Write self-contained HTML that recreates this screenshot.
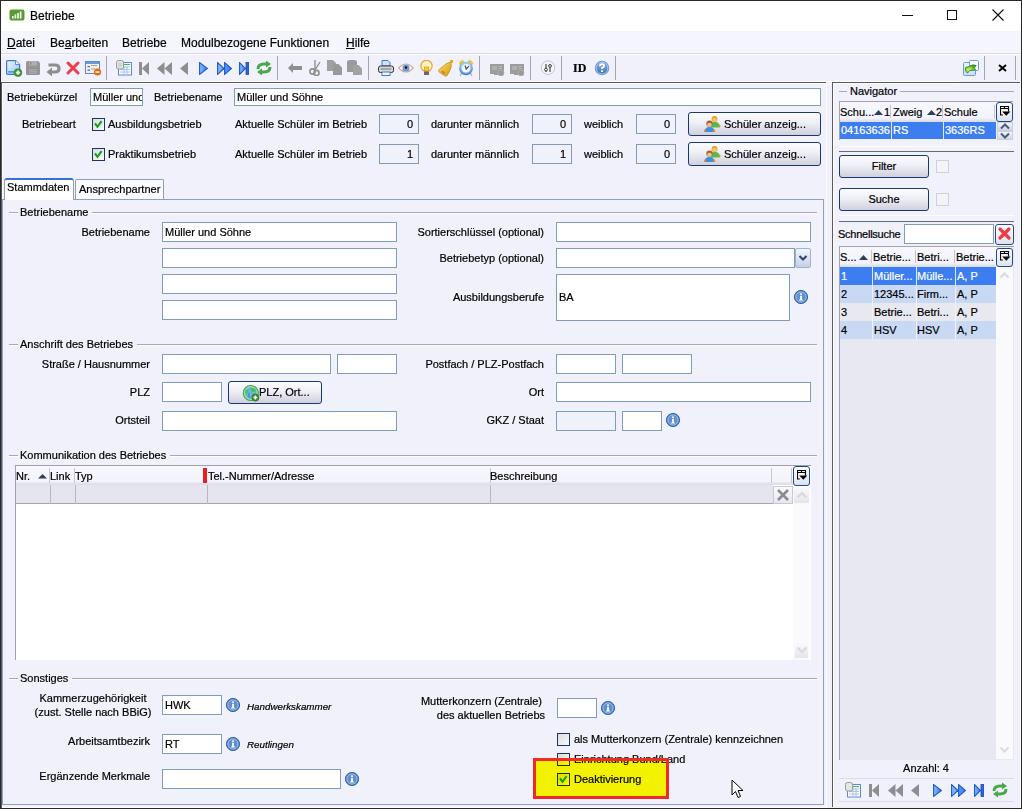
<!DOCTYPE html>
<html><head><meta charset="utf-8"><style>
html,body{margin:0;padding:0;width:1022px;height:809px;overflow:hidden;background:#fff}
.b,.t,.in,.btn,.cb,.ic{position:absolute}
.t{font-family:"Liberation Sans",sans-serif;font-size:11px;line-height:13px;white-space:nowrap;color:#000;-webkit-text-stroke-width:0.2px}
.m{font-size:12px;line-height:14px}
.it{font-style:italic;font-size:9.8px}
.in{box-sizing:border-box;border:1px solid #7f9db9;overflow:hidden}
.btn{box-sizing:border-box;border:1px solid #183872;border-radius:3px;background:linear-gradient(#fdfdff 0%,#eeeef6 45%,#d0d0dc 100%)}
.cb{box-sizing:border-box;width:13px;height:13px;border:1px solid #1c3560;background:linear-gradient(135deg,#dcdcdc,#fafafa)}
u{text-decoration:underline}
</style></head><body>
<div class="b" style="left:0;top:0;width:1022px;height:809px;background:#fff"></div>
<svg class="ic" style="left:9px;top:9px" width="16" height="12"><rect x="0.5" y="0.5" width="15" height="11" rx="2" fill="#5a9a32"/><rect x="3" y="7" width="1.6" height="2.5" fill="#fff"/><rect x="5.6" y="5.5" width="1.6" height="4" fill="#fff"/><rect x="8.2" y="4" width="1.6" height="5.5" fill="#fff"/><rect x="10.8" y="2.5" width="1.6" height="7" fill="#fff"/></svg>
<div class="t" style="left:30px;top:9px;font-size:12px;line-height:14px">Betriebe</div>
<div class="b" style="left:902px;top:15px;width:11px;height:1px;background:#111"></div>
<div class="b" style="left:947px;top:10px;width:10px;height:10px;border:1px solid #111;box-sizing:border-box"></div>
<svg class="ic" style="left:992px;top:9px" width="12" height="12"><path d="M0.5 0.5 L11.5 11.5 M11.5 0.5 L0.5 11.5" stroke="#111" stroke-width="1.1"/></svg>
<div class="b" style="left:1px;top:31px;width:1020px;height:23px;background:#f5f5fd"></div>
<div class="b" style="left:1px;top:53px;width:1020px;height:1px;background:#dcdce8"></div>
<div class="t m" style="left:7px;top:36px"><u>D</u>atei</div>
<div class="t m" style="left:50px;top:36px">Be<u>a</u>rbeiten</div>
<div class="t m" style="left:122px;top:36px">Betriebe</div>
<div class="t m" style="left:181px;top:36px">Modulbezogene Funktionen</div>
<div class="t m" style="left:346px;top:36px"><u>H</u>ilfe</div>
<div class="b" style="left:1px;top:54px;width:1020px;height:28px;background:#f1f1fb"></div>
<div class="b" style="left:1px;top:54px;width:1020px;height:1px;background:#fdfdff"></div>
<div class="b" style="left:1px;top:81px;width:958px;height:1px;background:#fdfdff"></div>
<div class="b" style="left:106px;top:56px;width:1px;height:24px;background:#a4a4ae"></div>
<div class="b" style="left:277px;top:56px;width:1px;height:24px;background:#a4a4ae"></div>
<div class="b" style="left:368px;top:56px;width:1px;height:24px;background:#a4a4ae"></div>
<div class="b" style="left:479px;top:56px;width:1px;height:24px;background:#a4a4ae"></div>
<div class="b" style="left:530px;top:56px;width:1px;height:24px;background:#a4a4ae"></div>
<div class="b" style="left:561px;top:56px;width:1px;height:24px;background:#a4a4ae"></div>
<div class="b" style="left:615px;top:56px;width:1px;height:24px;background:#a4a4ae"></div>
<div class="b" style="left:984px;top:56px;width:1px;height:24px;background:#a4a4ae"></div>
<div class="b" style="left:1015px;top:56px;width:1px;height:24px;background:#a4a4ae"></div>
<svg class="ic" style="left:5px;top:59px" width="18" height="18" viewBox="0 0 18 18"><defs><linearGradient id="gd" x1="0" y1="0" x2="1" y2="1"><stop offset="0" stop-color="#f0f7fe"/><stop offset="1" stop-color="#9cc6f0"/></linearGradient></defs><path d="M2.6 1.6 H10.6 L14.6 5.6 V14.4 Q14.6 15.4 13.6 15.4 H2.6 Q1.6 15.4 1.6 14.4 V2.6 Q1.6 1.6 2.6 1.6 Z" fill="url(#gd)" stroke="#3a7ad6" stroke-width="1.2"/><path d="M10.6 1.6 V5.6 H14.6" fill="#fff" stroke="#3a7ad6" stroke-width="0.9"/><rect x="3.2" y="12" width="8" height="1.7" fill="#3fa0ea"/><circle cx="13" cy="13.6" r="3.9" fill="#3f9a30" stroke="#2c7a22" stroke-width="0.6"/><path d="M10.9 13.6 H15.1 M13 11.5 V15.7" stroke="#fff" stroke-width="1.6"/></svg>
<svg class="ic" style="left:25px;top:60px" width="16" height="16" viewBox="0 0 16 16"><path d="M1 2.5 Q1 1 2.5 1 H13 L15 3 V13.5 Q15 15 13.5 15 H2.5 Q1 15 1 13.5 Z" fill="#969696"/><rect x="4" y="1" width="8" height="4.5" fill="#b0b0b0"/><rect x="5" y="1.8" width="1.4" height="2.8" fill="#8a8a8a"/><rect x="3.5" y="8.5" width="9" height="6" fill="#a8a8a8" stroke="#8c8c8c" stroke-width="0.8"/><path d="M4.5 10.5 H11.5 M4.5 12.5 H11.5" stroke="#9a9a9a" stroke-width="0.8"/></svg>
<svg class="ic" style="left:46px;top:61px" width="15" height="15" viewBox="0 0 15 15"><path d="M2.5 4 H9 Q13 4 13 7.5 Q13 11 9 11 H5.5" stroke="#8e8e8e" stroke-width="3.2" fill="none"/><path d="M0.5 11 L6 6.5 V15.5 Z" fill="#8e8e8e"/></svg>
<svg class="ic" style="left:66px;top:61px" width="14" height="14" viewBox="0 0 14 14"><path d="M2 2 L12 12 M12 2 L2 12" stroke="#f03c46" stroke-width="3" stroke-linecap="round"/></svg>
<svg class="ic" style="left:85px;top:61px" width="17" height="15" viewBox="0 0 17 15"><rect x="0.5" y="0.5" width="14" height="12" fill="#f3f0e6" stroke="#5a8ad0"/><rect x="1" y="1" width="13" height="2" fill="#6a9ad8"/><rect x="2.5" y="5" width="2.5" height="1.2" fill="#3a6ac8"/><rect x="2.5" y="8.5" width="2.5" height="1.2" fill="#3a6ac8"/><path d="M6 4.5 H12 M6 8 H10" stroke="#a0a0a0" stroke-width="1"/><circle cx="12.5" cy="11" r="3.6" fill="#e66a10"/><rect x="10.5" y="10.3" width="4" height="1.5" fill="#fff"/></svg>
<svg class="ic" style="left:116px;top:60px" width="17" height="16" viewBox="0 0 17 16"><rect x="2.5" y="2.5" width="13" height="12.5" fill="#fff" stroke="#5a8ad0"/><path d="M5 4.5 H14" stroke="#58b04a" stroke-width="1.2"/><path d="M4 7 H14 M4 9.5 H14 M4 12 H14 M8 6 V14 M11 6 V14" stroke="#9cc0ec" stroke-width="0.9"/><rect x="0.5" y="0.5" width="7" height="8.5" rx="2" fill="#e6e6e6" stroke="#9a9a9a"/><path d="M3 2.5 V7 M5 2.5 V7" stroke="#c0c0c0"/></svg>
<svg class="ic" style="left:139px;top:62px" width="10" height="13" viewBox="0 0 10 13"><rect x="0" y="0" width="3" height="13" fill="#8e8e8e"/><path d="M10 0 V13 L3 6.5 Z" fill="#8e8e8e"/></svg>
<svg class="ic" style="left:157px;top:62px" width="15" height="13" viewBox="0 0 15 13"><path d="M7.5 0 V13 L0 6.5 Z M15 0 V13 L7.5 6.5 Z" fill="#8e8e8e"/></svg>
<svg class="ic" style="left:180px;top:62px" width="8" height="13" viewBox="0 0 8 13"><path d="M8 0 V13 L0 6.5 Z" fill="#8e8e8e"/></svg>
<svg class="ic" style="left:199px;top:62px" width="9" height="13" viewBox="0 0 9 13"><defs><linearGradient id="gb" x1="0" y1="0" x2="1" y2="0"><stop offset="0" stop-color="#8cbcf4"/><stop offset="1" stop-color="#3a7ae0"/></linearGradient></defs><path d="M0.6 0.6 V12.4 L8.4 6.5 Z" fill="url(#gb)" stroke="#1a5ad0" stroke-width="1.1"/></svg>
<svg class="ic" style="left:217px;top:62px" width="15" height="13" viewBox="0 0 15 13"><defs><linearGradient id="gb" x1="0" y1="0" x2="1" y2="0"><stop offset="0" stop-color="#8cbcf4"/><stop offset="1" stop-color="#3a7ae0"/></linearGradient></defs><path d="M0.6 0.6 V12.4 L7 6.5 Z M7.6 0.6 V12.4 L14.4 6.5 Z" fill="url(#gb)" stroke="#1a5ad0" stroke-width="1.1"/></svg>
<svg class="ic" style="left:239px;top:62px" width="10" height="13" viewBox="0 0 10 13"><defs><linearGradient id="gb" x1="0" y1="0" x2="1" y2="0"><stop offset="0" stop-color="#8cbcf4"/><stop offset="1" stop-color="#3a7ae0"/></linearGradient></defs><path d="M0.6 0.6 V12.4 L6.5 6.5 Z" fill="url(#gb)" stroke="#1a5ad0" stroke-width="1.1"/><rect x="7" y="0.5" width="2.6" height="12" fill="#2a62d8" stroke="#1a4ac0" stroke-width="0.8"/></svg>
<svg class="ic" style="left:256px;top:60px" width="16" height="16" viewBox="0 0 16 16"><path d="M2 9 Q2 4 8 4 H11" stroke="#4aa84a" stroke-width="3" fill="none"/><path d="M10 0.5 L15 4 L10 7.5 Z" fill="#4aa84a"/><path d="M14 7 Q14 12 8 12 H5" stroke="#4aa84a" stroke-width="3" fill="none"/><path d="M6 8.5 L1 12 L6 15.5 Z" fill="#4aa84a"/></svg>
<svg class="ic" style="left:288px;top:63px" width="14" height="10" viewBox="0 0 14 10"><rect x="4" y="3" width="10" height="4" fill="#8e8e8e"/><path d="M5 0 V10 L0 5 Z" fill="#8e8e8e"/></svg>
<svg class="ic" style="left:309px;top:60px" width="12" height="16" viewBox="0 0 12 16"><path d="M6 0 V10 M11 2 L6 10" stroke="#909090" stroke-width="1.4" fill="none"/><circle cx="3.5" cy="11.5" r="2.6" stroke="#909090" stroke-width="1.6" fill="none"/><circle cx="7.5" cy="13" r="2.6" stroke="#909090" stroke-width="1.6" fill="none"/></svg>
<svg class="ic" style="left:327px;top:60px" width="16" height="16" viewBox="0 0 16 16"><path d="M0 0 H6 L9 3 V11 H0 Z" fill="#a0a0a0"/><path d="M6 4 H11.5 L15 7.5 V15 H6 Z" fill="#999"/></svg>
<svg class="ic" style="left:347px;top:60px" width="16" height="16" viewBox="0 0 16 16"><path d="M0 2 Q0 0 3 0 H7 Q10 0 10 2 V12 H0 Z" fill="#9a9a9a"/><path d="M6 5 H11.5 L15 8.5 V15 H6 Z" fill="#a2a2a2"/></svg>
<svg class="ic" style="left:378px;top:60px" width="16" height="16" viewBox="0 0 16 16"><path d="M4 0.5 H10 L12 2.5 V6 H4 Z" fill="#cfe2fa" stroke="#3a7ad6"/><rect x="0.5" y="6" width="15" height="6.5" rx="2" fill="#d8d8d8" stroke="#333"/><rect x="2.5" y="8" width="11" height="2" fill="#a8a8a8"/><rect x="4" y="12" width="8" height="3.5" fill="#fff" stroke="#3a7ad6"/></svg>
<svg class="ic" style="left:398px;top:62px" width="16" height="12" viewBox="0 0 16 12"><path d="M0.8 6 Q8 -2 15.2 6 Q8 14 0.8 6 Z" fill="#fff" stroke="#dca880" stroke-width="1.2"/><circle cx="8" cy="6" r="3.6" fill="#6a9ae6"/><circle cx="8" cy="5.5" r="1.2" fill="#111"/></svg>
<svg class="ic" style="left:419px;top:60px" width="15" height="16" viewBox="0 0 15 16"><circle cx="7.5" cy="6" r="5.6" fill="#fff8c0" stroke="#e8a040" stroke-width="1.2"/><rect x="5.5" y="7" width="4" height="4" fill="#f4d020" stroke="#e89030" stroke-width="0.8"/><rect x="5" y="11.5" width="5" height="3.5" fill="#6a6a6a"/></svg>
<svg class="ic" style="left:437px;top:59px" width="18" height="18" viewBox="0 0 18 18"><defs><linearGradient id="gbell" x1="0" y1="0" x2="1" y2="1"><stop offset="0" stop-color="#fbe070"/><stop offset="1" stop-color="#d69a10"/></linearGradient></defs><path d="M14 3 Q9.5 3.5 6.5 7 L2 10.5 Q0.8 12 2.3 13.2 L8 17 Q9.6 17.8 10.3 16.2 L12.6 12.2 Q15.2 7.5 14 3 Z" fill="url(#gbell)" stroke="#c48a10" stroke-width="0.7"/><circle cx="14.6" cy="2.4" r="1.7" fill="#e2aa22"/><ellipse cx="6.2" cy="13.3" rx="2.2" ry="1.4" transform="rotate(35 6.2 13.3)" fill="#c89020"/></svg>
<svg class="ic" style="left:458px;top:59px" width="16" height="18" viewBox="0 0 16 18"><defs><radialGradient id="gcl" cx="0.5" cy="0.4" r="0.6"><stop offset="0.55" stop-color="#9cd0f8"/><stop offset="1" stop-color="#2f6cc0"/></radialGradient></defs><ellipse cx="3.6" cy="3.6" rx="3" ry="2" transform="rotate(-40 3.6 3.6)" fill="#f2c442"/><ellipse cx="12.4" cy="3.6" rx="3" ry="2" transform="rotate(40 12.4 3.6)" fill="#f2c442"/><path d="M3.5 14.5 L2 16.8 M12.5 14.5 L14 16.8" stroke="#b4b4b4" stroke-width="1.3"/><circle cx="8" cy="9.5" r="6.8" fill="url(#gcl)"/><circle cx="8" cy="9.3" r="4.2" fill="#f4faff"/><path d="M7 6.5 L8.2 10 L10.8 7.2" stroke="#505050" stroke-width="1.2" fill="none"/></svg>
<svg class="ic" style="left:489px;top:63px" width="16" height="13" viewBox="0 0 16 13"><path d="M1 1 H15 V9 H11 V12 H5 V11 H1 Z" fill="#9c9c9c"/><rect x="3" y="3" width="5" height="4" fill="#b0b0b0"/><path d="M9.5 3.5 H13 M9.5 5.5 H13" stroke="#b8b8b8"/><circle cx="12" cy="10" r="3" fill="#999" stroke="#b0b0b0" stroke-width="0.8"/></svg>
<svg class="ic" style="left:509px;top:63px" width="16" height="13" viewBox="0 0 16 13"><path d="M1 1 H15 V9 H11 V12 H5 V11 H1 Z" fill="#9c9c9c"/><rect x="3" y="3" width="5" height="4" fill="#b0b0b0"/><path d="M9.5 3.5 H13 M9.5 5.5 H13" stroke="#b8b8b8"/><circle cx="12" cy="10" r="3" fill="#999" stroke="#b0b0b0" stroke-width="0.8"/></svg>
<svg class="ic" style="left:540px;top:60px" width="16" height="16" viewBox="0 0 16 16"><circle cx="8" cy="7.7" r="6.8" fill="#f4f4f4" stroke="#c8c8c8"/><path d="M6 4 V12 M10 4 V12" stroke="#3a3a3a" stroke-width="1.1"/><circle cx="6" cy="9.6" r="1.4" fill="#fff" stroke="#3a3a3a"/><circle cx="10" cy="6" r="1.4" fill="#fff" stroke="#3a3a3a"/></svg>
<div class="t" style="left:573px;top:61px;font-family:'Liberation Serif',serif;font-weight:bold;font-size:12px;line-height:14px">ID</div>
<svg class="ic" style="left:594px;top:60px" width="16" height="16" viewBox="0 0 16 16"><defs><linearGradient id="gh" x1="0" y1="0" x2="0" y2="1"><stop offset="0" stop-color="#8ab0e0"/><stop offset="1" stop-color="#4272b4"/></linearGradient></defs><circle cx="8" cy="8" r="7.2" fill="#5584c4"/><circle cx="8" cy="8" r="6" fill="url(#gh)" stroke="#b8d2f0" stroke-width="0.9"/><path d="M5.9 6.2 Q5.9 4.2 8 4.2 Q10.1 4.2 10.1 6 Q10.1 7.3 8 7.9 V9" stroke="#fff" stroke-width="1.7" fill="none"/><rect x="7.1" y="10.2" width="1.8" height="1.8" fill="#fff"/></svg>
<svg class="ic" style="left:963px;top:60px" width="16" height="16" viewBox="0 0 16 16"><defs><linearGradient id="gwin" x1="0" y1="0" x2="0" y2="1"><stop offset="0" stop-color="#f0f6fe"/><stop offset="1" stop-color="#c8def8"/></linearGradient><radialGradient id="garr" cx="0.35" cy="0.6" r="0.6"><stop offset="0" stop-color="#eaf860"/><stop offset="1" stop-color="#3aa020"/></radialGradient></defs><rect x="0.5" y="2.5" width="12" height="13" rx="1" fill="url(#gwin)" stroke="#6e9cd2"/><rect x="6.5" y="0.5" width="9" height="10" rx="1" fill="#fbfdff" stroke="#6e9cd2"/><path d="M13.2 5.6 Q10 3.8 6.5 6.3 L2.2 7.8 Q2 11.5 4.5 13.2 L6.5 10.6 Q9.5 9.8 12.6 9.6 Q10 8.2 13.2 5.6 Z" fill="url(#garr)" stroke="#178a17" stroke-width="0.8"/></svg>
<svg class="ic" style="left:998px;top:64px" width="9" height="8" viewBox="0 0 9 8"><path d="M1 1 L8 7 M8 1 L1 7" stroke="#000" stroke-width="1.9"/></svg>
<div class="b" style="left:1px;top:82px;width:826px;height:727px;background:#f1f1fb"></div>
<div class="b" style="left:0px;top:82px;width:827px;height:1px;background:#5a5a5a"></div>
<div class="b" style="left:1px;top:82px;width:1px;height:727px;background:#5a5a5a"></div>
<div class="b" style="left:2px;top:83px;width:824px;height:1px;background:#fdfdff"></div>
<div class="b" style="left:2px;top:807px;width:824px;height:1px;background:#fdfdff"></div>
<div class="b" style="left:2px;top:83px;width:1px;height:726px;background:#fdfdff"></div>
<div class="b" style="left:826px;top:82px;width:1px;height:727px;background:#fdfdff"></div>
<div class="t " style="left:7px;top:91px;">Betriebekürzel</div>
<div class="in" style="left:90px;top:88px;width:53px;height:18px;background:#fff;overflow:hidden"><div class="t" style="left:2px;top:2px">Müller und Söhne</div></div>
<div class="t " style="left:154px;top:91px;">Betriebename</div>
<div class="in" style="left:234px;top:88px;width:587px;height:18px;background:#fff;"><div class="t" style="left:2px;top:2px">Müller und Söhne</div></div>
<div class="t " style="left:22px;top:118px;">Betriebeart</div>
<div class="cb" style="left:92px;top:118px;"><svg width="13" height="13" style="position:absolute;left:-1px;top:-1px"><path d="M3 5.4 L5.5 8.8 L9.6 3.2" stroke="#14a014" stroke-width="2.1" fill="none"/></svg></div>
<div class="t " style="left:108px;top:118px;">Ausbildungsbetrieb</div>
<div class="t " style="left:235px;top:118px;">Aktuelle Schüler im Betrieb</div>
<div class="in" style="left:379px;top:114px;width:40px;height:20px;background:#f1f1fb;"><div class="t" style="right:5px;top:3px">0</div></div>
<div class="t " style="left:431px;top:118px;">darunter männlich</div>
<div class="in" style="left:532px;top:114px;width:40px;height:20px;background:#f1f1fb;"><div class="t" style="right:5px;top:3px">0</div></div>
<div class="t " style="left:584px;top:118px;">weiblich</div>
<div class="in" style="left:636px;top:114px;width:40px;height:20px;background:#f1f1fb;"><div class="t" style="right:5px;top:3px">0</div></div>
<div class="btn" style="left:688px;top:112px;width:133px;height:24px"><div class="t" style="left:35px;top:5px">Schüler anzeig...</div><svg class="ic" style="left:15px;top:3px" width="18" height="17"><path d="M7 11.5 Q7 5.8 10.5 5.8 Q14.5 5.8 15.8 9.5 L15.8 11.5 Z" fill="#5cb84a"/><circle cx="15.6" cy="10" r="1.1" fill="#e88a2a"/><circle cx="10.5" cy="2.9" r="3" fill="#e8a818"/><ellipse cx="10.5" cy="3.9" rx="2.2" ry="1.9" fill="#f6c28a"/><path d="M0.6 16 Q0.6 11 5.5 11 Q10.4 11 10.4 16 Z" fill="#3a8ee6"/><circle cx="0.9" cy="14.8" r="1.2" fill="#e88a2a"/><circle cx="10.1" cy="14.8" r="1.2" fill="#e88a2a"/><circle cx="5.5" cy="7.6" r="3.2" fill="#a86430"/><ellipse cx="5.5" cy="8.7" rx="2.3" ry="2" fill="#f6c28a"/></svg></div>
<div class="cb" style="left:92px;top:148px;"><svg width="13" height="13" style="position:absolute;left:-1px;top:-1px"><path d="M3 5.4 L5.5 8.8 L9.6 3.2" stroke="#14a014" stroke-width="2.1" fill="none"/></svg></div>
<div class="t " style="left:108px;top:148px;">Praktikumsbetrieb</div>
<div class="t " style="left:235px;top:148px;">Aktuelle Schüler im Betrieb</div>
<div class="in" style="left:379px;top:144px;width:40px;height:20px;background:#f1f1fb;"><div class="t" style="right:5px;top:3px">1</div></div>
<div class="t " style="left:431px;top:148px;">darunter männlich</div>
<div class="in" style="left:532px;top:144px;width:40px;height:20px;background:#f1f1fb;"><div class="t" style="right:5px;top:3px">1</div></div>
<div class="t " style="left:584px;top:148px;">weiblich</div>
<div class="in" style="left:636px;top:144px;width:40px;height:20px;background:#f1f1fb;"><div class="t" style="right:5px;top:3px">0</div></div>
<div class="btn" style="left:688px;top:142px;width:133px;height:24px"><div class="t" style="left:35px;top:5px">Schüler anzeig...</div><svg class="ic" style="left:15px;top:3px" width="18" height="17"><path d="M7 11.5 Q7 5.8 10.5 5.8 Q14.5 5.8 15.8 9.5 L15.8 11.5 Z" fill="#5cb84a"/><circle cx="15.6" cy="10" r="1.1" fill="#e88a2a"/><circle cx="10.5" cy="2.9" r="3" fill="#e8a818"/><ellipse cx="10.5" cy="3.9" rx="2.2" ry="1.9" fill="#f6c28a"/><path d="M0.6 16 Q0.6 11 5.5 11 Q10.4 11 10.4 16 Z" fill="#3a8ee6"/><circle cx="0.9" cy="14.8" r="1.2" fill="#e88a2a"/><circle cx="10.1" cy="14.8" r="1.2" fill="#e88a2a"/><circle cx="5.5" cy="7.6" r="3.2" fill="#a86430"/><ellipse cx="5.5" cy="8.7" rx="2.3" ry="2" fill="#f6c28a"/></svg></div>
<div class="b" style="left:2px;top:199px;width:822px;height:606px;border:1px solid #8da1bf;box-sizing:border-box;background:#f1f1fb"></div>
<div class="b" style="left:4px;top:178px;width:70px;height:22px;background:#fff;border:1px solid #8da1bf;border-bottom:none;border-top:2px solid #3a6fd8;border-radius:3px 3px 0 0;box-sizing:border-box"></div>
<div class="t " style="left:7px;top:181px;">Stammdaten</div>
<div class="b" style="left:75px;top:179px;width:89px;height:20px;background:#fbfbff;border:1px solid #8da1bf;border-bottom:none;border-radius:2px 2px 0 0;box-sizing:border-box"></div>
<div class="t " style="left:79px;top:183px;">Ansprechpartner</div>
<div class="b" style="left:9px;top:212px;width:9px;height:1px;background:#a7a7b4"></div>
<div class="b" style="left:9px;top:213px;width:9px;height:1px;background:#fdfdff"></div>
<div class="b" style="left:92px;top:212px;width:725px;height:1px;background:#a7a7b4"></div>
<div class="b" style="left:92px;top:213px;width:725px;height:1px;background:#fdfdff"></div>
<div class="t " style="left:20px;top:206px;">Betriebename</div>
<div class="t " style="right:872px;top:226px;">Betriebename</div>
<div class="in" style="left:162px;top:222px;width:235px;height:20px;background:#fff;"><div class="t" style="left:2px;top:3px">Müller und Söhne</div></div>
<div class="in" style="left:162px;top:248px;width:235px;height:20px;background:#fff;"></div>
<div class="in" style="left:162px;top:274px;width:235px;height:20px;background:#fff;"></div>
<div class="in" style="left:162px;top:300px;width:235px;height:20px;background:#fff;"></div>
<div class="t " style="right:478px;top:226px;">Sortierschlüssel (optional)</div>
<div class="in" style="left:556px;top:222px;width:255px;height:20px;background:#fff;"></div>
<div class="t " style="right:478px;top:252px;">Betriebetyp (optional)</div>
<div class="in" style="left:556px;top:248px;width:239px;height:20px;background:#fff;"></div>
<div class="b" style="left:795px;top:248px;width:16px;height:20px;border:1px solid #9fb3d0;border-radius:2px;box-sizing:border-box;background:linear-gradient(#f4f6fc,#c4cfe6)"></div>
<svg class="ic" style="left:797px;top:252px" width="12" height="12"><path d="M2.5 4 L6 7.5 L9.5 4" stroke="#2c4470" stroke-width="2" fill="none"/></svg>
<div class="t " style="right:478px;top:291px;">Ausbildungsberufe</div>
<div class="in" style="left:556px;top:274px;width:234px;height:47px;background:#fff;"></div>
<div class="t " style="left:559px;top:291px;">BA</div>
<svg class="ic" style="left:793px;top:289px" width="16" height="16"><circle cx="8" cy="8" r="6.6" fill="#4f7fc4" stroke="#3664b2" stroke-width="1"/><circle cx="8" cy="8" r="5.1" fill="#6290cc" stroke="#a8c6ea" stroke-width="0.9"/><rect x="7.1" y="4.4" width="1.8" height="1.5" fill="#fff"/><path d="M7.1 6.7 H8.9 V10.5 H9.9 V11.5 H6.1 V10.5 H7.1 Z" fill="#fff"/></svg>
<div class="b" style="left:9px;top:344px;width:9px;height:1px;background:#a7a7b4"></div>
<div class="b" style="left:9px;top:345px;width:9px;height:1px;background:#fdfdff"></div>
<div class="b" style="left:137px;top:344px;width:680px;height:1px;background:#a7a7b4"></div>
<div class="b" style="left:137px;top:345px;width:680px;height:1px;background:#fdfdff"></div>
<div class="t " style="left:20px;top:338px;">Anschrift des Betriebes</div>
<div class="t " style="right:872px;top:358px;">Straße / Hausnummer</div>
<div class="in" style="left:162px;top:354px;width:169px;height:20px;background:#fff;"></div>
<div class="in" style="left:337px;top:354px;width:60px;height:20px;background:#fff;"></div>
<div class="t " style="right:872px;top:386px;">PLZ</div>
<div class="in" style="left:162px;top:382px;width:60px;height:20px;background:#fff;"></div>
<div class="btn" style="left:228px;top:381px;width:94px;height:23px"><div class="t" style="left:30px;top:4px">PLZ, Ort...</div><svg class="ic" style="left:13px;top:2px" width="18" height="18"><circle cx="8.8" cy="9" r="7.5" fill="#6cb8d8" stroke="#48a848" stroke-width="1.2"/><circle cx="8.8" cy="9" r="6.3" fill="none" stroke="#c4ecb4" stroke-width="0.8"/><path d="M9 4 Q13 3.5 14.5 7 Q12 8.5 10 7.5 Q8 6.5 9 4 Z M3.5 6 Q5.5 5 6.5 7 Q5 9 4 11 Q2.8 9 3.5 6 Z" fill="#44c454"/><path d="M6.5 8 Q8.5 9 8 12 Q7.5 14.5 9 15 Q6.5 14.5 5.5 12 Z" fill="#4a98d8"/><circle cx="13.4" cy="13.5" r="3.7" fill="#3a8c2c" stroke="#2a6a1e" stroke-width="0.5"/><path d="M11.4 13.5 H15.4 M13.4 11.5 V15.5" stroke="#fff" stroke-width="1.5"/></svg></div>
<div class="t " style="right:872px;top:414px;">Ortsteil</div>
<div class="in" style="left:162px;top:411px;width:235px;height:20px;background:#fff;"></div>
<div class="t " style="right:478px;top:358px;">Postfach / PLZ-Postfach</div>
<div class="in" style="left:556px;top:354px;width:60px;height:20px;background:#fff;"></div>
<div class="in" style="left:622px;top:354px;width:70px;height:20px;background:#fff;"></div>
<div class="t " style="right:478px;top:386px;">Ort</div>
<div class="in" style="left:556px;top:382px;width:255px;height:20px;background:#fff;"></div>
<div class="t " style="right:478px;top:414px;">GKZ / Staat</div>
<div class="in" style="left:556px;top:411px;width:60px;height:20px;background:#f1f1fb;"></div>
<div class="in" style="left:622px;top:411px;width:40px;height:20px;background:#fff;"></div>
<svg class="ic" style="left:665px;top:412px" width="16" height="16"><circle cx="8" cy="8" r="6.6" fill="#4f7fc4" stroke="#3664b2" stroke-width="1"/><circle cx="8" cy="8" r="5.1" fill="#6290cc" stroke="#a8c6ea" stroke-width="0.9"/><rect x="7.1" y="4.4" width="1.8" height="1.5" fill="#fff"/><path d="M7.1 6.7 H8.9 V10.5 H9.9 V11.5 H6.1 V10.5 H7.1 Z" fill="#fff"/></svg>
<div class="b" style="left:9px;top:455px;width:9px;height:1px;background:#a7a7b4"></div>
<div class="b" style="left:9px;top:456px;width:9px;height:1px;background:#fdfdff"></div>
<div class="b" style="left:170px;top:455px;width:647px;height:1px;background:#a7a7b4"></div>
<div class="b" style="left:170px;top:456px;width:647px;height:1px;background:#fdfdff"></div>
<div class="t " style="left:20px;top:449px;">Kommunikation des Betriebes</div>
<div class="b" style="left:15px;top:465px;width:796px;height:195px;background:#fff;border-left:1px solid #a0a0a8;border-top:1px solid #a0a0a8;box-sizing:border-box"></div>
<div class="b" style="left:16px;top:466px;width:777px;height:19px;background:linear-gradient(#f7f7fd 0%,#f3f3fb 80%,#d9d9e3 100%)"></div>
<div class="b" style="left:16px;top:485px;width:757px;height:19px;background:#e5e5ef;border-bottom:1px solid #a6a6b0;box-sizing:border-box"></div>
<div class="b" style="left:50px;top:485px;width:1px;height:19px;background:#b8b8c4"></div>
<div class="b" style="left:75px;top:485px;width:1px;height:19px;background:#b8b8c4"></div>
<div class="b" style="left:207px;top:485px;width:1px;height:19px;background:#b8b8c4"></div>
<div class="b" style="left:490px;top:485px;width:1px;height:19px;background:#b8b8c4"></div>
<div class="b" style="left:49px;top:468px;width:1px;height:15px;background:#c8c8d4"></div>
<div class="b" style="left:74px;top:468px;width:1px;height:15px;background:#c8c8d4"></div>
<div class="b" style="left:490px;top:468px;width:1px;height:15px;background:#c8c8d4"></div>
<div class="b" style="left:771px;top:468px;width:1px;height:15px;background:#c8c8d4"></div>
<div class="b" style="left:791px;top:468px;width:1px;height:15px;background:#c8c8d4"></div>
<div class="b" style="left:203px;top:468px;width:4px;height:15px;background:#ee1c1c"></div>
<div class="t " style="left:16px;top:470px;">Nr.</div>
<svg class="ic" style="left:38px;top:474px" width="9" height="5"><path d="M0 4.5 L4.5 0 L9 4.5 Z" fill="#2c4058"/></svg>
<div class="t " style="left:50px;top:470px;">Link</div>
<div class="t " style="left:75px;top:470px;">Typ</div>
<div class="t " style="left:208px;top:470px;">Tel.-Nummer/Adresse</div>
<div class="t " style="left:490px;top:470px;">Beschreibung</div>
<div class="b" style="left:773px;top:486px;width:20px;height:18px;background:linear-gradient(#fbfbfd,#e6e6ee);border:1px solid #c8c8d0;box-sizing:border-box"></div>
<svg class="ic" style="left:776px;top:488px" width="14" height="14"><path d="M2 2 L12 12 M12 2 L2 12" stroke="#8c8c8c" stroke-width="2.6"/></svg>
<div class="b" style="left:793px;top:466px;width:17px;height:20px;background:linear-gradient(#fdfdff,#dfe3ee);border:1px solid #1e4a8a;border-radius:3px;box-sizing:border-box"></div>
<div class="b" style="left:793px;top:487px;width:17px;height:173px;background:#fafafd"></div>
<svg class="ic" style="left:797px;top:470px" width="12" height="12"><path d="M0.5 0 V9 H2.8 M0 0.5 H9 M0 2.5 H9 M4.5 0 V2.5 M8.5 0 V5.5" stroke="#000" stroke-width="1.15" fill="none"/><path d="M2.2 5.6 H10.4 L6.3 9.8 Z" fill="#000"/></svg>
<div class="b" style="left:794px;top:487px;width:15px;height:16px;background:linear-gradient(#fafafd,#e4e4ec)"></div>
<svg class="ic" style="left:796px;top:491px" width="12" height="8"><path d="M1.5 6.5 L6 2 L10.5 6.5" stroke="#d8d8de" stroke-width="2.2" fill="none"/></svg>
<div class="b" style="left:644px;top:643px;width:165px;height:15px;display:none"></div>
<div class="b" style="left:795px;top:643px;width:13px;height:15px;background:linear-gradient(#fafafd,#e4e4ec)"></div>
<svg class="ic" style="left:796px;top:646px" width="12" height="8"><path d="M1.5 1.5 L6 6 L10.5 1.5" stroke="#d8d8de" stroke-width="2.2" fill="none"/></svg>
<div class="b" style="left:9px;top:678px;width:9px;height:1px;background:#a7a7b4"></div>
<div class="b" style="left:9px;top:679px;width:9px;height:1px;background:#fdfdff"></div>
<div class="b" style="left:72px;top:678px;width:745px;height:1px;background:#a7a7b4"></div>
<div class="b" style="left:72px;top:679px;width:745px;height:1px;background:#fdfdff"></div>
<div class="t " style="left:20px;top:672px;">Sonstiges</div>
<div class="t " style="left:-57px;width:300px;text-align:center;top:692px;">Kammerzugehörigkeit</div>
<div class="t " style="left:-57px;width:300px;text-align:center;top:706px;">(zust. Stelle nach BBiG)</div>
<div class="in" style="left:162px;top:695px;width:60px;height:20px;background:#fff;"><div class="t" style="left:2px;top:3px">HWK</div></div>
<svg class="ic" style="left:225px;top:697px" width="16" height="16"><circle cx="8" cy="8" r="6.6" fill="#4f7fc4" stroke="#3664b2" stroke-width="1"/><circle cx="8" cy="8" r="5.1" fill="#6290cc" stroke="#a8c6ea" stroke-width="0.9"/><rect x="7.1" y="4.4" width="1.8" height="1.5" fill="#fff"/><path d="M7.1 6.7 H8.9 V10.5 H9.9 V11.5 H6.1 V10.5 H7.1 Z" fill="#fff"/></svg>
<div class="t it" style="left:247px;top:700px;">Handwerkskammer</div>
<div class="t " style="right:872px;top:735px;">Arbeitsamtbezirk</div>
<div class="in" style="left:162px;top:734px;width:60px;height:20px;background:#fff;"><div class="t" style="left:2px;top:3px">RT</div></div>
<svg class="ic" style="left:225px;top:736px" width="16" height="16"><circle cx="8" cy="8" r="6.6" fill="#4f7fc4" stroke="#3664b2" stroke-width="1"/><circle cx="8" cy="8" r="5.1" fill="#6290cc" stroke="#a8c6ea" stroke-width="0.9"/><rect x="7.1" y="4.4" width="1.8" height="1.5" fill="#fff"/><path d="M7.1 6.7 H8.9 V10.5 H9.9 V11.5 H6.1 V10.5 H7.1 Z" fill="#fff"/></svg>
<div class="t it" style="left:247px;top:738px;">Reutlingen</div>
<div class="t " style="right:872px;top:770px;">Ergänzende Merkmale</div>
<div class="in" style="left:162px;top:769px;width:179px;height:20px;background:#fff;"></div>
<svg class="ic" style="left:344px;top:771px" width="16" height="16"><circle cx="8" cy="8" r="6.6" fill="#4f7fc4" stroke="#3664b2" stroke-width="1"/><circle cx="8" cy="8" r="5.1" fill="#6290cc" stroke="#a8c6ea" stroke-width="0.9"/><rect x="7.1" y="4.4" width="1.8" height="1.5" fill="#fff"/><path d="M7.1 6.7 H8.9 V10.5 H9.9 V11.5 H6.1 V10.5 H7.1 Z" fill="#fff"/></svg>
<div class="t " style="right:480px;top:695px;">Mutterkonzern (Zentrale)</div>
<div class="t " style="right:477px;top:709px;">des aktuellen Betriebs</div>
<div class="in" style="left:557px;top:698px;width:40px;height:20px;background:#fff;"></div>
<svg class="ic" style="left:600px;top:700px" width="16" height="16"><circle cx="8" cy="8" r="6.6" fill="#4f7fc4" stroke="#3664b2" stroke-width="1"/><circle cx="8" cy="8" r="5.1" fill="#6290cc" stroke="#a8c6ea" stroke-width="0.9"/><rect x="7.1" y="4.4" width="1.8" height="1.5" fill="#fff"/><path d="M7.1 6.7 H8.9 V10.5 H9.9 V11.5 H6.1 V10.5 H7.1 Z" fill="#fff"/></svg>
<div class="cb" style="left:557px;top:733px;"></div>
<div class="t " style="left:574px;top:733px;">als Mutterkonzern (Zentrale) kennzeichnen</div>
<div class="cb" style="left:557px;top:753px;"></div>
<div class="t " style="left:574px;top:753px;">Einrichtung Bund/Land</div>
<div class="cb" style="left:557px;top:773px;"><svg width="13" height="13" style="position:absolute;left:-1px;top:-1px"><path d="M3 5.4 L5.5 8.8 L9.6 3.2" stroke="#14a014" stroke-width="2.1" fill="none"/></svg></div>
<div class="t " style="left:574px;top:773px;">Deaktivierung</div>
<div class="b" style="left:536px;top:761px;width:130px;height:35px;background:#ffff00;mix-blend-mode:multiply"></div>
<div class="b" style="left:533px;top:758px;width:136px;height:41px;border:3px solid #ee2a2a;box-sizing:border-box"></div>
<div class="b" style="left:827px;top:82px;width:5px;height:726px;background:#f1f1fb"></div>
<div class="b" style="left:832px;top:82px;width:189px;height:727px;background:#f1f1fb"></div>
<div class="b" style="left:832px;top:82px;width:189px;height:1px;background:#5a5a5a"></div>
<div class="b" style="left:832px;top:82px;width:1px;height:725px;background:#5a5a5a"></div>
<div class="b" style="left:833px;top:83px;width:187px;height:1px;background:#fdfdff"></div>
<div class="b" style="left:833px;top:83px;width:1px;height:726px;background:#fdfdff"></div>
<div class="b" style="left:1020px;top:82px;width:1px;height:727px;background:#fdfdff"></div>
<div class="b" style="left:839px;top:91px;width:8px;height:1px;background:#a7a7b4"></div>
<div class="t " style="left:850px;top:85px;">Navigator</div>
<div class="b" style="left:900px;top:91px;width:114px;height:1px;background:#a7a7b4"></div>
<div class="b" style="left:839px;top:101px;width:174px;height:39px;border-left:1px solid #a4a4ac;border-top:1px solid #a4a4ac;box-sizing:border-box"></div>
<div class="b" style="left:840px;top:102px;width:156px;height:20px;background:linear-gradient(#f7f7fd 0%,#f3f3fb 80%,#d9d9e3 100%)"></div>
<div class="b" style="left:840px;top:122px;width:156px;height:17px;background:#3c7ef0"></div>
<div class="b" style="left:890px;top:105px;width:1px;height:13px;background:#c4c4d0"></div>
<div class="b" style="left:942px;top:105px;width:1px;height:13px;background:#c4c4d0"></div>
<div class="b" style="left:994px;top:105px;width:1px;height:13px;background:#c4c4d0"></div>
<div class="b" style="left:891px;top:122px;width:1px;height:17px;background:#e4ecfc"></div>
<div class="b" style="left:943px;top:122px;width:1px;height:17px;background:#e4ecfc"></div>
<div class="t " style="left:840px;top:106px;">Schu...</div>
<svg class="ic" style="left:874px;top:110px" width="9" height="5" viewBox="0 0 9 5"><path d="M0 5 L4.5 0 L9 5 Z" fill="#2c4058"/></svg>
<div class="t " style="left:884px;top:106px;">1</div>
<div class="t " style="left:893px;top:106px;">Zweig</div>
<svg class="ic" style="left:927px;top:110px" width="9" height="5" viewBox="0 0 9 5"><path d="M0 5 L4.5 0 L9 5 Z" fill="#2c4058"/></svg>
<div class="t " style="left:936px;top:106px;">2</div>
<div class="t " style="left:944px;top:106px;">Schule</div>
<div class="t " style="left:841px;top:124px;color:#fff">04163636</div>
<div class="t " style="left:893px;top:124px;color:#fff">RS</div>
<div class="t " style="left:945px;top:124px;color:#fff">3636RS</div>
<div class="b" style="left:996px;top:102px;width:17px;height:20px;background:linear-gradient(#fdfdff,#dfe3ee);border:1px solid #1e4a8a;border-radius:3px;box-sizing:border-box"></div>
<svg class="ic" style="left:1000px;top:106px" width="12" height="12" viewBox="0 0 12 12"><path d="M0.5 0 V9 H2.8 M0 0.5 H9 M0 2.5 H9 M4.5 0 V2.5 M8.5 0 V5.5" stroke="#000" stroke-width="1.15" fill="none"/><path d="M2.2 5.6 H10.4 L6.3 9.8 Z" fill="#000"/></svg>
<div class="b" style="left:997px;top:122px;width:16px;height:9px;background:linear-gradient(#f4f6fc,#cdd6ea);border:1px solid #c8d0e0;box-sizing:border-box"></div>
<div class="b" style="left:997px;top:131px;width:16px;height:9px;background:linear-gradient(#f4f6fc,#cdd6ea);border:1px solid #c8d0e0;box-sizing:border-box"></div>
<svg class="ic" style="left:999px;top:123px" width="12" height="7" viewBox="0 0 12 7"><path d="M2 5.5 L6 1.5 L10 5.5" stroke="#4a5a78" stroke-width="2" fill="none"/></svg>
<svg class="ic" style="left:999px;top:132px" width="12" height="7" viewBox="0 0 12 7"><path d="M2 1.5 L6 5.5 L10 1.5" stroke="#4a5a78" stroke-width="2" fill="none"/></svg>
<div class="b" style="left:839px;top:146px;width:175px;height:1px;background:#fdfdff"></div>
<div class="b" style="left:839px;top:151px;width:175px;height:1px;background:#6a6a72"></div>
<div class="btn" style="left:839px;top:155px;width:90px;height:23px"><div class="t" style="left:0;width:88px;text-align:center;top:4px">Filter</div></div>
<div class="b" style="left:936px;top:160px;width:13px;height:13px;border:1px solid #d0d0d8;background:#f4f4f8;box-sizing:border-box"></div>
<div class="btn" style="left:839px;top:188px;width:90px;height:23px"><div class="t" style="left:0;width:88px;text-align:center;top:4px">Suche</div></div>
<div class="b" style="left:936px;top:193px;width:13px;height:13px;border:1px solid #d0d0d8;background:#f4f4f8;box-sizing:border-box"></div>
<div class="b" style="left:839px;top:215px;width:175px;height:1px;background:#fdfdff"></div>
<div class="b" style="left:839px;top:221px;width:175px;height:1px;background:#6a6a72"></div>
<div class="t " style="left:838px;top:228px;letter-spacing:-0.25px">Schnellsuche</div>
<div class="in" style="left:904px;top:224px;width:90px;height:20px;background:#fff;"></div>
<div class="b" style="left:995px;top:224px;width:19px;height:21px;background:linear-gradient(#fdfdff,#dfe3ee);border:1px solid #2a4a80;border-radius:3px;box-sizing:border-box"></div>
<svg class="ic" style="left:997px;top:226px" width="15" height="16" viewBox="0 0 15 16"><path d="M3 3 L12 12 M12 3 L3 12" stroke="#f03c46" stroke-width="3.2" stroke-linecap="round"/></svg>
<div class="b" style="left:839px;top:246px;width:175px;height:514px;border-left:1px solid #a4a4ac;border-top:1px solid #a4a4ac;box-sizing:border-box;background:#e8e8f2"></div>
<div class="b" style="left:840px;top:247px;width:156px;height:20px;background:linear-gradient(#f7f7fd 0%,#f3f3fb 80%,#d9d9e3 100%)"></div>
<div class="b" style="left:871px;top:250px;width:1px;height:13px;background:#c4c4d0"></div>
<div class="b" style="left:915px;top:250px;width:1px;height:13px;background:#c4c4d0"></div>
<div class="b" style="left:954px;top:250px;width:1px;height:13px;background:#c4c4d0"></div>
<div class="t " style="left:840px;top:251px;">S...</div>
<svg class="ic" style="left:859px;top:255px" width="9" height="5" viewBox="0 0 9 5"><path d="M0 5 L4.5 0 L9 5 Z" fill="#2c4058"/></svg>
<div class="t " style="left:873px;top:251px;">Betrie...</div>
<div class="t " style="left:917px;top:251px;">Betri...</div>
<div class="t " style="left:956px;top:251px;">Betrie...</div>
<div class="b" style="left:996px;top:248px;width:17px;height:19px;background:linear-gradient(#fdfdff,#dfe3ee);border:1px solid #1e4a8a;border-radius:3px;box-sizing:border-box"></div>
<svg class="ic" style="left:1000px;top:251px" width="12" height="12" viewBox="0 0 12 12"><path d="M0.5 0 V9 H2.8 M0 0.5 H9 M0 2.5 H9 M4.5 0 V2.5 M8.5 0 V5.5" stroke="#000" stroke-width="1.15" fill="none"/><path d="M2.2 5.6 H10.4 L6.3 9.8 Z" fill="#000"/></svg>
<div class="b" style="left:840px;top:267px;width:156px;height:18px;background:#3c7ef0"></div>
<div class="b" style="left:872px;top:267px;width:1px;height:18px;background:#e4ecfc"></div>
<div class="b" style="left:916px;top:267px;width:1px;height:18px;background:#e4ecfc"></div>
<div class="b" style="left:955px;top:267px;width:1px;height:18px;background:#e4ecfc"></div>
<div class="t " style="left:841px;top:270px;color:#fff">1</div>
<div class="t " style="left:874px;top:270px;color:#fff">Müller...</div>
<div class="t " style="left:917px;top:270px;color:#fff">Mülle...</div>
<div class="t " style="left:957px;top:270px;color:#fff">A, P</div>
<div class="b" style="left:840px;top:285px;width:156px;height:18px;background:#c9d9f4"></div>
<div class="b" style="left:872px;top:285px;width:1px;height:18px;background:#eef2fa"></div>
<div class="b" style="left:916px;top:285px;width:1px;height:18px;background:#eef2fa"></div>
<div class="b" style="left:955px;top:285px;width:1px;height:18px;background:#eef2fa"></div>
<div class="t " style="left:841px;top:288px;color:#000">2</div>
<div class="t " style="left:874px;top:288px;color:#000"> 12345...</div>
<div class="t " style="left:917px;top:288px;color:#000">Firm...</div>
<div class="t " style="left:957px;top:288px;color:#000">A, P</div>
<div class="b" style="left:840px;top:303px;width:156px;height:18px;background:#e8e8f0"></div>
<div class="b" style="left:872px;top:303px;width:1px;height:18px;background:#eef2fa"></div>
<div class="b" style="left:916px;top:303px;width:1px;height:18px;background:#eef2fa"></div>
<div class="b" style="left:955px;top:303px;width:1px;height:18px;background:#eef2fa"></div>
<div class="t " style="left:841px;top:306px;color:#000">3</div>
<div class="t " style="left:874px;top:306px;color:#000">Betrie...</div>
<div class="t " style="left:917px;top:306px;color:#000">Betri...</div>
<div class="t " style="left:957px;top:306px;color:#000">A, P</div>
<div class="b" style="left:840px;top:321px;width:156px;height:18px;background:#c9d9f4"></div>
<div class="b" style="left:872px;top:321px;width:1px;height:18px;background:#eef2fa"></div>
<div class="b" style="left:916px;top:321px;width:1px;height:18px;background:#eef2fa"></div>
<div class="b" style="left:955px;top:321px;width:1px;height:18px;background:#eef2fa"></div>
<div class="t " style="left:841px;top:324px;color:#000">4</div>
<div class="t " style="left:874px;top:324px;color:#000">HSV</div>
<div class="t " style="left:917px;top:324px;color:#000">HSV</div>
<div class="t " style="left:957px;top:324px;color:#000">A, P</div>
<div class="b" style="left:996px;top:267px;width:17px;height:492px;background:#fafafd"></div>
<svg class="ic" style="left:998px;top:269px" width="13" height="13" viewBox="0 0 13 13"><path d="M2.5 8.5 L6.5 4.5 L10.5 8.5" stroke="#dcdce0" stroke-width="2.2" fill="none"/></svg>
<svg class="ic" style="left:998px;top:743px" width="13" height="13" viewBox="0 0 13 13"><path d="M2.5 4.5 L6.5 8.5 L10.5 4.5" stroke="#dcdce0" stroke-width="2.2" fill="none"/></svg>
<div class="t " style="left:776px;width:300px;text-align:center;top:762px;">Anzahl: 4</div>
<div class="b" style="left:839px;top:778px;width:175px;height:1px;background:#dcdce8"></div>
<svg class="ic" style="left:845px;top:782px" width="17" height="16" viewBox="0 0 17 16"><rect x="2.5" y="2.5" width="13" height="12.5" fill="#fff" stroke="#5a8ad0"/><path d="M5 4.5 H14" stroke="#58b04a" stroke-width="1.2"/><path d="M4 7 H14 M4 9.5 H14 M4 12 H14 M8 6 V14 M11 6 V14" stroke="#9cc0ec" stroke-width="0.9"/><rect x="0.5" y="0.5" width="7" height="8.5" rx="2" fill="#e6e6e6" stroke="#9a9a9a"/></svg>
<svg class="ic" style="left:869px;top:784px" width="10" height="13" viewBox="0 0 10 13"><rect x="0" y="0" width="3" height="13" fill="#8e8e8e"/><path d="M10 0 V13 L3 6.5 Z" fill="#8e8e8e"/></svg>
<svg class="ic" style="left:888px;top:784px" width="15" height="13" viewBox="0 0 15 13"><path d="M7.5 0 V13 L0 6.5 Z M15 0 V13 L7.5 6.5 Z" fill="#8e8e8e"/></svg>
<svg class="ic" style="left:911px;top:784px" width="8" height="13" viewBox="0 0 8 13"><path d="M8 0 V13 L0 6.5 Z" fill="#8e8e8e"/></svg>
<svg class="ic" style="left:933px;top:784px" width="9" height="13" viewBox="0 0 9 13"><defs><linearGradient id="gb" x1="0" y1="0" x2="1" y2="0"><stop offset="0" stop-color="#8cbcf4"/><stop offset="1" stop-color="#3a7ae0"/></linearGradient></defs><path d="M0.6 0.6 V12.4 L8.4 6.5 Z" fill="url(#gb)" stroke="#1a5ad0" stroke-width="1.1"/></svg>
<svg class="ic" style="left:951px;top:784px" width="15" height="13" viewBox="0 0 15 13"><defs><linearGradient id="gb" x1="0" y1="0" x2="1" y2="0"><stop offset="0" stop-color="#8cbcf4"/><stop offset="1" stop-color="#3a7ae0"/></linearGradient></defs><path d="M0.6 0.6 V12.4 L7 6.5 Z M7.6 0.6 V12.4 L14.4 6.5 Z" fill="url(#gb)" stroke="#1a5ad0" stroke-width="1.1"/></svg>
<svg class="ic" style="left:974px;top:784px" width="10" height="13" viewBox="0 0 10 13"><defs><linearGradient id="gb" x1="0" y1="0" x2="1" y2="0"><stop offset="0" stop-color="#8cbcf4"/><stop offset="1" stop-color="#3a7ae0"/></linearGradient></defs><path d="M0.6 0.6 V12.4 L6.5 6.5 Z" fill="url(#gb)" stroke="#1a5ad0" stroke-width="1.1"/><rect x="7" y="0.5" width="2.6" height="12" fill="#2a62d8" stroke="#1a4ac0" stroke-width="0.8"/></svg>
<svg class="ic" style="left:992px;top:782px" width="16" height="16" viewBox="0 0 16 16"><path d="M2 9 Q2 4 8 4 H11" stroke="#4aa84a" stroke-width="3" fill="none"/><path d="M10 0.5 L15 4 L10 7.5 Z" fill="#4aa84a"/><path d="M14 7 Q14 12 8 12 H5" stroke="#4aa84a" stroke-width="3" fill="none"/><path d="M6 8.5 L1 12 L6 15.5 Z" fill="#4aa84a"/></svg>
<div class="b" style="left:839px;top:801px;width:175px;height:1px;background:#dcdce8"></div>
<div class="b" style="left:0px;top:0px;width:1px;height:809px;background:#2a2a2a"></div>
<div class="b" style="left:0px;top:0px;width:1022px;height:1px;background:#2a2a2a"></div>
<div class="b" style="left:1021px;top:0px;width:1px;height:809px;background:#2a2a2a"></div>
<div class="b" style="left:0px;top:808px;width:1022px;height:1px;background:#2a2a2a"></div>
<svg class="ic" style="left:731px;top:779px" width="14" height="20" viewBox="0 0 14 20"><path d="M1 1 V16 L4.5 12.5 L7 18.5 L9.5 17.5 L7 11.5 H12 Z" fill="#fff" stroke="#000" stroke-width="1"/></svg>
</body></html>
